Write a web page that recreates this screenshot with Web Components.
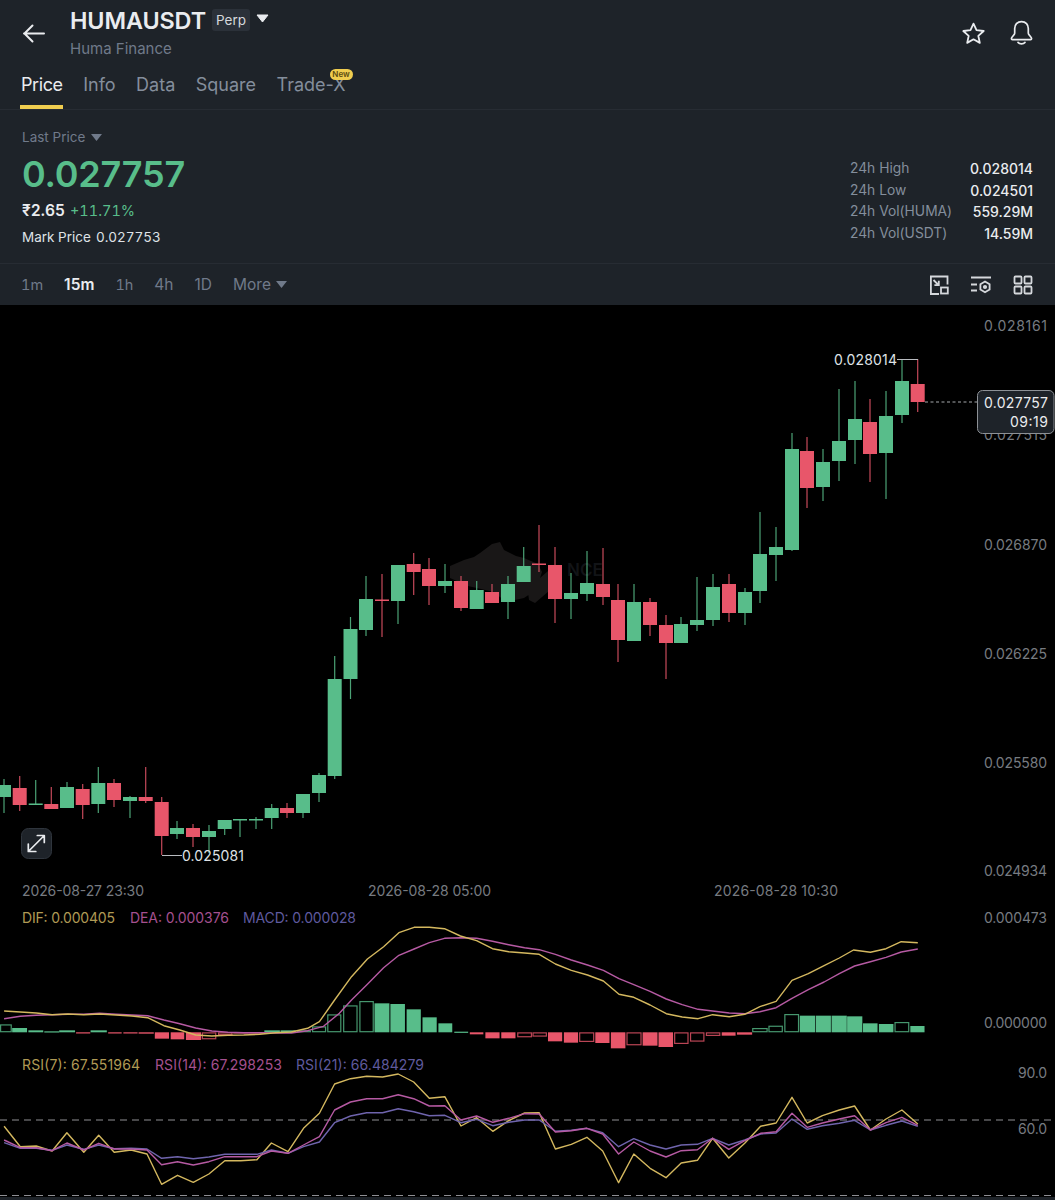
<!DOCTYPE html>
<html lang="en">
<head>
<meta charset="utf-8">
<title>HUMAUSDT Perp</title>
<style>
  html, body { margin: 0; padding: 0; background: #000; }
  body { width: 1055px; height: 1200px; overflow: hidden; font-family: Inter, "Liberation Sans", sans-serif; color: #eaecef; display: flex; flex-direction: column; }
</style>
</head>
<body>
<app-header symbol="HUMAUSDT" kind="Perp" name="Huma Finance"></app-header>
<tab-bar></tab-bar>
<price-panel></price-panel>
<interval-bar></interval-bar>
<kline-chart></kline-chart>

<script>
class AppHeader extends HTMLElement {
  constructor() {
    super();
    const s = this.attachShadow({ mode: 'open' });
    s.innerHTML = `<style>
      :host { display: flex; align-items: flex-start; height: 68px; box-sizing: border-box; background: #1e2329; padding: 7px 21px 0 22px; }
      .back { width: 24px; height: 24px; margin-top: 14px; margin-right: 24px; flex: none; }
      .titles { flex: 1; display: flex; flex-direction: column; }
      .row { display: flex; align-items: center; height: 26px; }
      .sym { font-size: 23.4px; font-weight: 600; color: #eaecef; letter-spacing: -.1px; }
      .kind { margin-left: 6px; background: #2b3139; color: #d5d8dc; font-size: 13.5px; padding: 0 4px; height: 22px; line-height: 22px; border-radius: 3px; }
      .tri { margin-left: 6px; width: 13px; height: 9px; margin-top: -4px; }
      .name { font-size: 15px; color: #707a8a; margin-top: 7px; line-height: 18px; }
      .acts { display: flex; gap: 23px; margin-top: 14px; }
      svg { display: block; }
    </style>
    <svg class="back" viewBox="0 0 24 24" fill="none" stroke="#eaecef" stroke-width="2" stroke-linecap="round" stroke-linejoin="round"><path d="M2 12.5h20M10.5 4.5 2.5 12.5l8 8"/></svg>
    <div class="titles">
      <div class="row"><span class="sym">${this.getAttribute('symbol')}</span><span class="kind">${this.getAttribute('kind')}</span>
      <svg class="tri" viewBox="0 0 13 9"><path d="M1 1h11L6.5 8z" fill="#eaecef" stroke="#eaecef" stroke-linejoin="round"/></svg></div>
      <div class="name">${this.getAttribute('name')}</div>
    </div>
    <div class="acts">
      <svg width="25" height="25" viewBox="0 0 25 25" fill="none" stroke="#eaecef" stroke-width="1.8" stroke-linejoin="round"><path d="M12.5 2.6l3 6.6 7.2.8-5.4 4.8 1.5 7.1-6.3-3.6-6.3 3.6 1.5-7.1L2.3 10l7.2-.8z"/></svg>
      <svg width="25" height="25" viewBox="0 0 25 25" fill="none" stroke="#eaecef" stroke-width="1.7" stroke-linejoin="round" stroke-linecap="round" style="margin-top:-1px"><path d="M12.5 1.6c-4.4 0-6.8 3.2-6.8 7v4.6c0 1.6-3.3 4-3.3 5.4 0 .6.4 1 1 1h18.2c.6 0 1-.4 1-1 0-1.400-3.300-3.800-3.300-5.400V8.600c0-3.800-2.400-7-6.800-7z"/><path d="M9 22.400c.8 1 2.100 1.500 3.500 1.500s2.700-.5 3.500-1.500"/></svg>
    </div>`;
  }
}
customElements.define('app-header', AppHeader);

class TabBar extends HTMLElement {
  constructor() {
    super();
    const s = this.attachShadow({ mode: 'open' });
    const tabs = ['Price', 'Info', 'Data', 'Square', 'Trade-X'];
    s.innerHTML = `<style>
      :host { display: flex; gap: 20.5px; height: 42px; box-sizing: border-box; background: #1e2329; padding: 0 0 0 21px; border-bottom: 1px solid #272c33; }
      .t { position: relative; font-size: 18px; line-height: 34px; color: #848e9c; height: 41px; box-sizing: border-box; white-space: nowrap; }
      .t.on { color: #eaecef; letter-spacing: -.4px; }
      .t.on::after { content: ""; position: absolute; left: -1px; right: 0; bottom: 0; height: 4px; background: #f0cd4f; }
      .new { position: absolute; right: -7px; top: 1px; width: 23px; height: 11px; border-radius: 6px; background: #f0cd4f; color: #5b4a10; font-size: 8px; font-weight: 600; line-height: 11px; text-align: center; letter-spacing: 0; }
    </style>` + tabs.map((t, i) => `<div class="t ${i === 0 ? 'on' : ''}">${t}${t === 'Trade-X' ? '<span class="new">New</span>' : ''}</div>`).join('');
  }
}
customElements.define('tab-bar', TabBar);

class StatRow extends HTMLElement {
  constructor() {
    super();
    const s = this.attachShadow({ mode: 'open' });
    s.innerHTML = `<style>
      :host { display: flex; justify-content: space-between; height: 21.6px; line-height: 21.6px; font-size: 14px; }
      .l { color: #848e9c; font-size: 13.8px; }
      .v { color: #eaecef; font-weight: 500; }
    </style><span class="l"><slot name="label"></slot></span><span class="v"><slot name="value"></slot></span>`;
  }
}
customElements.define('stat-row', StatRow);

class PricePanel extends HTMLElement {
  constructor() {
    super();
    const s = this.attachShadow({ mode: 'open' });
    const stats = [['24h High', '0.028014'], ['24h Low', '0.024501'], ['24h Vol(HUMA)', '559.29M'], ['24h Vol(USDT)', '14.59M']];
    s.innerHTML = `<style>
      :host { display: flex; justify-content: space-between; height: 154px; box-sizing: border-box; background: #1e2329; padding: 18px 22px 0 22px; border-bottom: 1px solid #272c33; }
      .last { display: flex; align-items: center; gap: 6px; font-size: 13.5px; color: #707a8a; line-height: 18px; }
      .big { font-size: 36px; font-weight: 600; color: #58bd8a; line-height: 44px; margin-top: 6px; letter-spacing: -.2px; }
      .sub { display: flex; align-items: baseline; gap: 5px; line-height: 20px; margin-top: 5px; font-variant-numeric: tabular-nums; }
      .inr { font-size: 15.5px; font-weight: 600; color: #eaecef; }
      .chg { font-size: 14.5px; color: #58bd8a; }
      .mark { display: flex; gap: 5px; font-size: 13.5px; color: #dfe2e6; line-height: 18px; margin-top: 7px; font-variant-numeric: tabular-nums; }
      .stats { width: 183px; margin-top: 30px; }
      svg { display: block; }
    </style>
    <div>
      <div class="last">Last Price <svg width="11" height="7" viewBox="0 0 11 7"><path d="M0 0h11L5.500 7z" fill="#707a8a"/></svg></div>
      <div class="big">0.027757</div>
      <div class="sub"><span class="inr">₹2.65</span><span class="chg">+11.71%</span></div>
      <div class="mark"><span>Mark Price</span><span>0.027753</span></div>
    </div>
    <div class="stats">${stats.map(r => `<stat-row><span slot="label">${r[0]}</span><span slot="value">${r[1]}</span></stat-row>`).join('')}</div>`;
  }
}
customElements.define('price-panel', PricePanel);

class IntervalBar extends HTMLElement {
  constructor() {
    super();
    const s = this.attachShadow({ mode: 'open' });
    const c = 'fill="none" stroke="#d5d8dc" stroke-width="1.8"';
    s.innerHTML = `<style>
      :host { display: flex; align-items: center; height: 41px; box-sizing: border-box; background: #1e2329; padding: 0 22px 0 21px; font-size: 15.5px; color: #707a8a; }
      .on { color: #eaecef; font-weight: 600; }
      .one { font-size: 14.5px; font-variant-numeric: tabular-nums; }
      .items { display: flex; gap: 21px; flex: 1; align-items: center; }
      .more { display: flex; align-items: center; gap: 5px; }
      .icons { display: flex; gap: 22px; }
      svg { display: block; }
    </style>
    <div class="items"><span class="one">1m</span><span class="on">15m</span><span class="one">1h</span><span>4h</span><span>1D</span>
      <span class="more">More <svg width="11" height="7" viewBox="0 0 11 7"><path d="M0 0h11L5.500 7z" fill="#707a8a"/></svg></span></div>
    <div class="icons">
      <svg width="20" height="20" viewBox="0 0 20 20" ${c}><path d="M10 19H1.900V1.500h16.600V9.500"/><path d="M4.500 5l5 5M9.800 5.800v4.400H5.400"/><rect x="12" y="12.500" width="6.800" height="6"/></svg>
      <svg width="20" height="20" viewBox="0 0 20 20" ${c}><path d="M0 2.500h20M0 9.500h6M0 15.500h6"/><path d="M14 6.500l4.600 2.700v5.300L14 17.300l-4.600-2.800V9.200z"/><circle cx="14" cy="12" r="1.200" fill="#d5d8dc"/></svg>
      <svg width="20" height="20" viewBox="0 0 20 20" ${c}><rect x="1.500" y="1.500" width="7" height="7" rx="1"/><rect x="11.500" y="1.500" width="7" height="7" rx="1"/><rect x="1.500" y="11.500" width="7" height="7" rx="1"/><rect x="11.500" y="11.500" width="7" height="7" rx="1"/></svg>
    </div>`;
  }
}
customElements.define('interval-bar', IntervalBar);

class KlineChart extends HTMLElement {
  constructor() {
    super();
    const G = '#58bd8a', R = '#e8566a';
    const SX = 530 / 1568;
    // x, color, bodyTop, bodyBottom, wickTop, wickBottom
    const candles = [
      [4,'g',785,797,779,813],[19.7,'r',788,805,776,811],[35.7,'g',803.500,805,780,805],[51.3,'r',804,809,787,809],
      [67,'g',787,808,782,808],[82.7,'r',789,805,784,819],[98.3,'g',783,804,767,813],[114,'r',783,800,779,807],
      [130,'g',797,801,796,818],[145.7,'r',797,801,767,803],[161.7,'r',802,836,797,855],[177,'g',828,834,821,839],
      [193,'r',828,837,824,847],[209,'g',831,837,825,853],[224.7,'g',820,829,820,835],[240,'g',819,820.500,819,837],
      [256,'g',819,820.500,817,829],[271.7,'g',808,818,804,829],[287,'r',808,813,803,818],[303,'g',794,813,794,818],
      [319,'g',775,793,773,802],[334.7,'g',679,776,656,779],[350.5,'g',629,679,617,699],[366,'g',599,630,576,636],
      [382,'r',599.500,601,574,637],[398,'g',565,601,565,624],[413.7,'r',564,572,553,595],[429,'r',569,586,558,605],
      [445,'g',581,586,564,593],[461,'r',581,608,576,611],[476.7,'g',590,609,581,609],[492,'r',592,603,584,603],
      [508,'g',584,602,576,619],[523.7,'g',566,582,547,582],[539,'r',563.500,565,525,572],[555,'r',565,599,547,623],
      [571,'g',593,599,573,619],[587,'g',583,594,551,601],[603,'r',584,597,548,605],[618,'r',600,640,584,662],
      [634,'g',602,641,584,641],[650,'r',602,625,598,636],[666,'r',625,643,615,679],[681,'g',624,643,617,643],
      [697,'g',620,625,577,631],[713,'g',587,620,574,626],[729,'r',584,613,574,622],[745,'g',592,613,588,625],
      [760,'g',554,591,512,603],[776,'g',547,555,527,581],[792,'g',449,550,433,551],[807,'r',451,488,437,508],
      [823,'g',462,487,449,501],[839,'g',441,461,389,481],[855,'g',419,440,381,464],[870,'r',422,454,399,482],
      [886,'g',416,453,391,499],[902,'g',381,415,359,423],[917.7,'r',384,402,359,412]
    ];
    const candleSvg = candles.map(([x, c, t, b, wt, wb]) => {
      const col = c === 'g' ? G : R;
      return `<rect x="${x - 0.6}" y="${wt}" width="1.200" height="${wb - wt}" fill="${col}" opacity=".85"/><rect x="${x - 7}" y="${t}" width="14" height="${Math.max(b - t, 1.200)}" fill="${col}"/>`;
    }).join('');

    const BASE = 1032.3;
    const bars7 = [[0,35,373,'gh'],[36,80,384,'g'],[84,128,391,'g'],[131,175,394,'g'],[175,222,391,'g'],[225,267,400,'r'],[268,316,391,'g'],[320,360,400,'r'],[365,407,400,'r'],[410,455,401,'r'],[458,500,416,'r'],[505,545,418,'r'],[550,595,420,'r'],[597,640,418,'rh'],[645,688,406,'rh'],[690,735,400,'r'],[735,780,400,'r'],[782,828,391,'g'],[830,875,391,'g'],[878,920,391,'gh'],[923,965,379,'gh'],[968,1010,343,'gh'],[1015,1058,316,'gh'],[1063,1106,303,'gh'],[1108,1152,310,'g'],[1155,1198,312,'g'],[1203,1245,328,'g'],[1250,1292,352,'g'],[1297,1338,370,'g'],[1344,1385,395,'g'],[1390,1430,403,'r'],[1436,1478,415,'r'],[1483,1525,415,'r'],[1530,1574,412,'rh']];
    const bars8 = [[22,65,410,'rh'],[68,110,424,'r'],[115,157,428,'r'],[160,205,426,'rh'],[208,250,429,'r'],[254,297,445,'r'],[300,345,436,'rh'],[348,392,437,'r'],[395,438,441,'r'],[441,484,432,'rh'],[488,531,425,'rh'],[535,578,408,'rh'],[582,623,407,'r'],[627,672,404,'r'],[672,718,384,'gh'],[720,763,377,'gh'],[767,811,342,'gh'],[813,858,347,'g'],[860,905,347,'g'],[907,952,347,'g'],[953,998,349,'g'],[1000,1043,370,'g'],[1047,1090,372,'g'],[1093,1137,366,'gh'],[1140,1182,378,'g']];
    const bar = (ox) => ([a, b, v, k]) => {
      const x = ox + a * SX, w = (b - a) * SX, y = 900 + v / 3;
      const top = Math.min(y, BASE), h = Math.max(Math.abs(y - BASE), 1.200);
      const col = k[0] === 'g' ? G : R;
      if (k.length > 1) return `<rect x="${x + .6}" y="${top + .6}" width="${w - 1.200}" height="${Math.max(h - 1.200, .5)}" fill="none" stroke="${col}" stroke-width="1.200" opacity=".8"/>`;
      return `<rect x="${x}" y="${top}" width="${w}" height="${h}" fill="${col}"/>`;
    };
    const barSvg = bars7.map(bar(0)).join('') + bars8.map(bar(525)).join('');

    const pts = (a, b, oy) => a.map(p => `${(p[0] * SX).toFixed(1)},${(oy + p[1] / 3).toFixed(1)}`).concat(b.map(p => `${(525 + p[0] * SX).toFixed(1)},${(oy + p[1] / 3).toFixed(1)}`)).join(' ');
    const Y = '#d4b85f', P = '#b65aa3', V = '#6f64ad';
    const line = (p, c) => `<polyline points="${p}" fill="none" stroke="${c}" stroke-width="1.400" stroke-linejoin="round"/>`;

    const dif = pts([[12,333],[60,336],[107,339],[154,344],[201,342],[248,344],[295,342],[343,345],[390,348],[437,353],[485,377],[532,390],[579,405],[627,408],[674,406],[721,405],[768,403],[815,398],[862,396],[910,385],[945,365],[990,300],[1040,230],[1087,177],[1135,140],[1180,98],[1225,82],[1270,82],[1315,86],[1362,108],[1410,122],[1457,146],[1505,155],[1552,159]],
      [[42,163],[90,192],[137,211],[185,225],[232,243],[278,283],[322,292],[370,315],[418,341],[465,351],[512,356],[555,344],[604,350],[650,343],[695,320],[743,304],[790,241],[838,221],[885,197],[930,174],[972,150],[1022,157],[1068,146],[1113,125],[1162,128]], 900);
    const dea = pts([[12,356],[60,349],[107,346],[154,344],[201,343],[248,343],[295,340],[343,343],[390,345],[437,347],[485,360],[532,371],[579,384],[627,393],[674,397],[721,398],[768,398],[815,399],[862,399],[910,392],[957,379],[1004,340],[1040,300],[1087,253],[1135,203],[1180,166],[1225,147],[1270,128],[1315,115],[1362,113],[1410,115],[1457,124],[1505,134],[1552,143]],
      [[42,149],[90,163],[137,180],[185,195],[232,211],[278,236],[322,254],[370,274],[418,297],[465,314],[512,328],[555,333],[604,339],[650,341],[695,335],[743,323],[790,295],[838,269],[885,246],[930,221],[975,198],[1022,185],[1068,172],[1113,156],[1162,147]], 900);

    const r7 = pts([[12,229],[60,290],[107,288],[154,303],[198,248],[248,307],[292,256],[338,307],[388,300],[435,312],[478,403],[525,376],[572,397],[618,372],[665,332],[712,332],[760,329],[803,279],[852,305],[898,235],[945,190],[990,102],[1037,86],[1085,79],[1132,81],[1178,72],[1224,96],[1270,145],[1316,140],[1364,228],[1410,203],[1458,244],[1505,212],[1552,189]],
      [[42,188],[90,297],[137,283],[183,262],[230,303],[277,398],[322,312],[370,355],[417,383],[462,339],[510,331],[555,265],[603,324],[650,280],[697,229],[743,219],[790,142],[835,219],[880,197],[930,180],[975,168],[1022,240],[1068,207],[1115,180],[1162,222]], 1050);
    const r14 = pts([[12,270],[60,293],[107,293],[154,302],[198,279],[248,300],[292,280],[338,297],[388,297],[435,300],[478,344],[525,335],[572,345],[618,335],[665,320],[712,320],[760,320],[803,303],[852,310],[898,285],[945,260],[990,180],[1037,156],[1085,146],[1132,146],[1178,134],[1224,146],[1270,168],[1316,167],[1364,210],[1410,198],[1458,217],[1505,205],[1552,191]],
      [[42,192],[90,246],[137,242],[183,235],[230,252],[277,312],[322,276],[370,303],[417,321],[462,302],[510,299],[555,265],[603,298],[650,272],[697,250],[743,245],[790,190],[835,232],[880,219],[930,207],[975,197],[1022,240],[1068,218],[1115,202],[1162,226]], 1050);
    const r21 = pts([[12,278],[60,295],[107,295],[154,301],[198,285],[248,298],[292,285],[338,296],[388,295],[435,297],[478,325],[525,320],[572,326],[618,321],[665,313],[712,313],[760,313],[803,300],[852,310],[898,290],[945,276],[990,218],[1037,198],[1085,188],[1132,188],[1178,176],[1224,185],[1270,197],[1316,196],[1364,218],[1410,208],[1458,227],[1505,217],[1552,210]],
      [[42,210],[90,244],[137,241],[183,235],[230,248],[277,290],[322,266],[370,285],[417,297],[462,285],[510,283],[555,265],[603,285],[650,270],[697,252],[743,249],[790,207],[835,238],[880,227],[930,220],[975,211],[1022,240],[1068,226],[1115,213],[1162,229]], 1050);

    const T = (x, y, t, len, attrs) => `<text x="${x}" y="${y}" textLength="${len}" lengthAdjust="spacing" ${attrs}>${t}</text>`;
    const axis = [['0.028161',326,63],['0.027515',435,63],['0.026870',545,63],['0.026225',654,63],['0.025580',763,63],['0.024934',871,63],['0.000473',918,63],['0.000000',1023,63],['90.0',1073,29],['60.0',1129,29]];
    const axisSvg = axis.map(([t, y, l]) => T(1047, y + 5, t, l, 'class="ax" text-anchor="end"')).join('');

    const s = this.attachShadow({ mode: 'open' });
    s.innerHTML = `<style>
      :host { display: block; height: 895px; background: #000; }
      svg { display: block; font-family: Inter, "Liberation Sans", sans-serif; }
      text { font-size: 14px; }
      .ax, .dt { fill: #777b80; }
      .ann { fill: #dfe2e6; }
      .tag { fill: #eaecef; }
    </style>
    <svg width="1055" height="895" viewBox="0 305 1055 895">
      <rect x="0" y="1197" width="1055" height="3" fill="#1e2329"/>
      <path d="M450 566l14-6 10-3 6-4 12-9 8-2 4 8 12 6 8 2 14 6 4 8-6 18-12 8-18 4-12-10-26-6-18-8zM528 592l12-14 8-7 5 6-4 14-14 12-6-3z" fill="#191717"/>
      <text x="567" y="576" style="font-size:17px;font-weight:600" fill="#121417">NCE</text>
      ${axisSvg}
      ${T(22, 896, '2026-08-27 23:30', 122, 'class="dt"')}
      ${T(368, 896, '2026-08-28 05:00', 123, 'class="dt"')}
      ${T(714, 896, '2026-08-28 10:30', 124, 'class="dt"')}
      ${candleSvg}
      <path d="M162 855.500h20M897 359.500h21" stroke="#b9bcc0" stroke-width="1" fill="none"/>
      ${T(834, 365, '0.028014', 63, 'class="ann"')}
      ${T(182, 861, '0.025081', 62, 'class="ann"')}
      <path d="M925 402h52" stroke="#a5a8ac" stroke-width="1" stroke-dasharray="3 2.500"/>
      <rect x="977.500" y="390.500" width="76.500" height="43" rx="5" fill="#1e2329" stroke="#8d9196"/>
      ${T(1048, 408, '0.027757', 64, 'class="tag" text-anchor="end"')}
      ${T(1048, 427, '09:19', 38, 'class="tag" text-anchor="end"')}
      <rect x="21.500" y="828.500" width="30" height="30" rx="7" fill="#1e2329" stroke="#2f353d"/>
      <path d="M29 851l15-15M37.500 835.500h7v7M28.500 844v7.500h7.500" fill="none" stroke="#eaecef" stroke-width="1.700" stroke-linecap="round" stroke-linejoin="round" transform="translate(-.2 0)"/>
      ${T(22, 923, 'DIF: 0.000405', 93, 'fill="#b09a55"')}
      ${T(130, 923, 'DEA: 0.000376', 99, 'fill="#a5508f"')}
      ${T(243, 923, 'MACD: 0.000028', 113, 'fill="#5f5a9e"')}
      ${barSvg}
      ${line(dea, P)}
      ${line(dif, Y)}
      ${T(22, 1070, 'RSI(7): 67.551964', 118, 'fill="#b09a55"')}
      ${T(155, 1070, 'RSI(14): 67.298253', 127, 'fill="#a5508f"')}
      ${T(296, 1070, 'RSI(21): 66.484279', 128, 'fill="#5f5a9e"')}
      <path d="M0 1120h1055M0 1195.500h1055" stroke="#8f8f94" stroke-width="1.200" stroke-dasharray="7 5"/>
      ${line(r7, Y)}
      ${line(r21, V)}
      ${line(r14, P)}
    </svg>`;
  }
}
customElements.define('kline-chart', KlineChart);
</script>
</body>
</html>
